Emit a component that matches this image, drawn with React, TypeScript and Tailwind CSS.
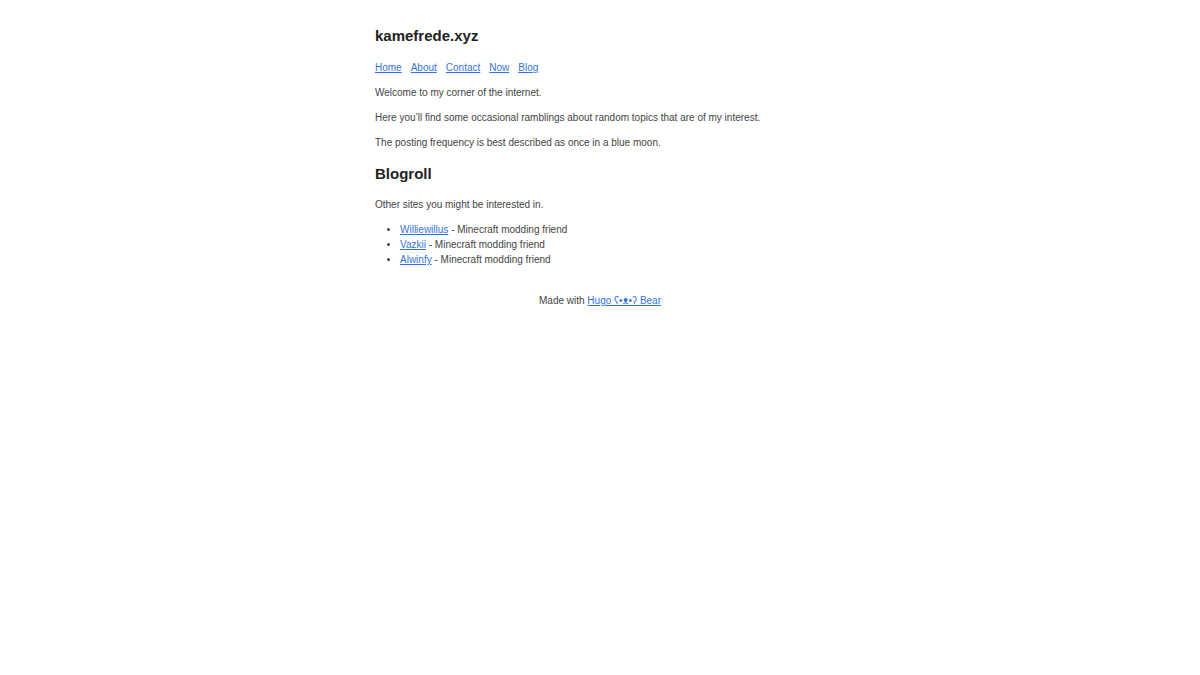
const nav = ['Home', 'About', 'Contact', 'Now', 'Blog'];

const friends = ['Williewillus', 'Vazkii', 'Alwinfy'];

export default function App() {
  return (
    <div className="min-h-screen bg-white text-[10px] leading-[1.5] text-[#444] [font-family:'Liberation_Sans',Arial,sans-serif]">
      <div className="mx-auto w-[450px] pt-[25px]">
        <header>
          <h1 className="text-[15px] font-bold leading-[1.5] text-[#222]">kamefrede.xyz</h1>
          <nav className="mt-[12.5px] flex gap-[9px]">
            {nav.map((n) => (
              <a key={n} href="#" className="text-[#3273dc] underline">
                {n}
              </a>
            ))}
          </nav>
        </header>
        <main className="mt-[10px]">
          <p>Welcome to my corner of the internet.</p>
          <p className="mt-[10px]">
            Here you’ll find some occasional ramblings about random topics that are of my interest.
          </p>
          <p className="mt-[10px]">The posting frequency is best described as once in a blue moon.</p>
          <h2 className="mt-[13px] text-[15px] font-bold leading-[1.5] text-[#222]">Blogroll</h2>
          <p className="mt-[11.5px]">Other sites you might be interested in.</p>
          <ul className="mt-[10px] list-disc pl-[25px]">
            {friends.map((f) => (
              <li key={f}>
                <a href="#" className="text-[#3273dc] underline">
                  {f}
                </a>{' '}
                - Minecraft modding friend
              </li>
            ))}
          </ul>
        </main>
        <footer className="mt-[26px] text-center">
          Made with{' '}
          <a href="#" className="text-[#3273dc] underline">
            Hugo ʕ•ᴥ•ʔ Bear
          </a>
        </footer>
      </div>
    </div>
  );
}
